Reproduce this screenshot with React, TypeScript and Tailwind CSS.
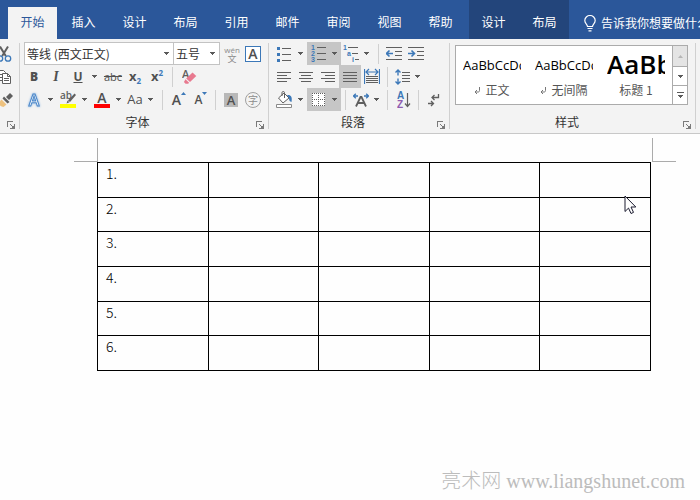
import { ReactNode } from "react";
import clsx from "clsx";

const INK = "#5f5f5f";
const BLUE = "#3c78b8";

const tabs = ["开始", "插入", "设计", "布局", "引用", "邮件", "审阅", "视图", "帮助"];
const toolTabs = ["设计", "布局"];

const styleCards = [
  { name: "正文", mark: true, big: false },
  { name: "无间隔", mark: true, big: false },
  { name: "标题 1", mark: false, big: true },
];

/* ---------- small building blocks ---------- */

const Tool = ({
  label,
  children,
  w = "w-[22px]",
  styleClass,
}: {
  label: string;
  children: ReactNode;
  w?: string;
  styleClass?: string;
}) => (
  <button
    type="button"
    aria-label={label}
    className={clsx(
      "h-full shrink-0 flex items-center justify-center leading-none text-[#505050]",
      w,
      styleClass
    )}
  >
    {children}
  </button>
);

const CaretIcon = () => (
  <svg width="5" height="3" viewBox="0 0 5 3" shapeRendering="crispEdges">
    <path d="M0 0h5v1h-1v1h-1v1h-1v-1h-1v-1h-1z" fill="#5a5a5a" />
  </svg>
);

const Caret = ({ label }: { label: string }) => (
  <button
    type="button"
    aria-label={label}
    className="h-full w-3 shrink-0 flex items-center pl-[3px]"
  >
    <CaretIcon />
  </button>
);

const Sep = ({ styleClass }: { styleClass: string }) => (
  <div className={clsx("w-px h-5 shrink-0 bg-[#d0d0d0]", styleClass)} />
);

const Row = ({ children }: { children: ReactNode }) => (
  <div className="h-[23px] flex items-center">{children}</div>
);

const Group = ({
  title,
  w,
  children,
}: {
  title: string;
  w: string;
  children: ReactNode;
}) => (
  <>
    <section className={clsx("shrink-0 flex flex-col pt-[3px]", w)}>
      <div className="h-[69px]">{children}</div>
      <footer className="h-[22px] flex items-center">
        <h2 className="flex-1 text-center text-xs text-[#333]">{title}</h2>
        <button
          type="button"
          aria-label={`${title} 更多`}
          className="w-4 flex justify-center pt-[6px]"
        >
          <svg width="8" height="8" viewBox="0 0 8 8" shapeRendering="crispEdges">
            <path d="M0.5 6V0.5H6M3 3l3 3" fill="none" stroke="#7a7a7a" />
            <path d="M3 7h4v-4h1v5h-5zM5 5h2v2h-2z" fill="#7a7a7a" />
          </svg>
        </button>
      </footer>
    </section>
    <div className="w-px my-1 shrink-0 bg-[#d0d0d0]" />
  </>
);

/* ---------- icons ---------- */

const CutIcon = () => (
  <svg width="16" height="18" viewBox="0 0 16 18" fill="none">
    <path d="M4 1.5L9.8 11M12 1.5L6.2 11" stroke={INK} strokeWidth="2" />
    <circle cx="4" cy="13.5" r="2.7" stroke={BLUE} strokeWidth="1.3" />
    <circle cx="12" cy="13.5" r="2.7" stroke={BLUE} strokeWidth="1.3" />
  </svg>
);

const CopyIcon = () => (
  <svg width="16" height="16" viewBox="0 0 16 16" fill="#fff" stroke={INK}>
    <path d="M1.5 1.5h6l2 2v8h-8z" />
    <path d="M3 5.5h4M3 8.5h3" />
    <path d="M6.5 4.5h5l3 3v7h-8z" />
    <path d="M11.5 4.5v3h3M8 9.5h5M8 11.5h5" fill="none" />
  </svg>
);

const BrushIcon = () => (
  <svg width="17" height="16" viewBox="0 0 17 16">
    <path d="M14 1l3 3-4 4-3-3z" fill={INK} />
    <path d="M8 4.5l5.5 5.5-2 1.5-5-5z" fill={INK} />
    <path d="M5.5 7.5l5 5-3 2.5c-2-.5-4-1.5-5.5-3.5z" fill="#eec27f" />
  </svg>
);

const HighlightIcon = () => (
  <svg width="17" height="17" viewBox="0 0 17 17">
    <text x="0" y="8" fontSize="10" fontWeight="600" fontFamily="Open Sans" fill={INK}>
      ab
    </text>
    <path d="M14.5 2.5l1.5 1.5-6 7-2-1.5z" fill={INK} />
    <path d="M7.5 9.5l2 1.8-3 1.2z" fill={INK} />
    <path d="M0 13h16v4H0z" fill="#ffff00" />
  </svg>
);

const EraserIcon = () => (
  <svg width="15" height="16" viewBox="0 0 15 16">
    <text x="0" y="9" fontSize="11" fontWeight="600" fontFamily="Open Sans" fill={INK}>
      A
    </text>
    <path d="M10.5 3.5l3.8 3.5-6.3 6-3.8-3.5z" fill="#e8798f" />
    <path d="M3.5 10.2l3.6 3.5-1 1h-2.500l-1.700-1.800z" fill="#e8798f" />
  </svg>
);

const BulletsIcon = () => (
  <svg width="14" height="16" viewBox="0 0 14 16" shapeRendering="crispEdges">
    <path d="M0 1h3v3H0zM0 7h3v3H0zM0 13h3v3H0z" fill={BLUE} />
    <path d="M5 2h9v1H5zM5 8h9v1H5zM5 14h9v1H5z" fill={INK} />
  </svg>
);

const NumbersIcon = () => (
  <svg width="15" height="18" viewBox="0 0 15 18">
    <g fontSize="7" fontWeight="700" fontFamily="Liberation Sans" fill={BLUE}>
      <text x="0" y="5">1</text>
      <text x="0" y="11">2</text>
      <text x="0" y="17">3</text>
    </g>
    <path d="M6 2h9v1H6zM6 8h9v1H6zM6 14h9v1H6z" fill={INK} />
  </svg>
);

const MultiLevelIcon = () => (
  <svg width="16" height="18" viewBox="0 0 16 18">
    <g fontSize="7" fontWeight="700" fontFamily="Liberation Sans" fill={BLUE}>
      <text x="0" y="5">1</text>
      <text x="4" y="11">a</text>
      <text x="9" y="17">i</text>
    </g>
    <path d="M5 2h10v1H5zM9 8h6v1H9zM12 14h4v1h-4z" fill={INK} />
  </svg>
);

const AlignIcon = ({ d }: { d: string }) => (
  <svg width="14" height="10" viewBox="0 0 14 10" shapeRendering="crispEdges">
    <path d={d} stroke={INK} fill="none" />
  </svg>
);

const DistributeIcon = () => (
  <svg width="16" height="17" viewBox="0 0 16 17" fill="none">
    <path d="M0.5 1v15M15.5 1v15M2 4h12M5 1L2 4l3 3M11 1l3 3-3 3" stroke={BLUE} strokeWidth="1.2" />
    <path d="M2 8.5h12M2 10.5h12M2 12.5h12M2 14.5h12" stroke={INK} />
  </svg>
);

const IndentIcon = ({ out }: { out?: boolean }) => (
  <svg width="16" height="14" viewBox="0 0 16 14" fill="none">
    <path d="M0 0.5h16M9 4.5h7M9 8.5h7M0 12.5h16" stroke={INK} />
    <path
      d={out ? "M7 6.5H1M3.5 3.5l-3 3 3 3" : "M0 6.5H6M3.5 3.5l3 3-3 3"}
      stroke={BLUE}
      strokeWidth="1.6"
    />
  </svg>
);

const LineSpacingIcon = () => (
  <svg width="15" height="16" viewBox="0 0 15 16" fill="none">
    <path d="M3 1v5.5M0.5 3.5L3 1l2.5 2.5M3 9.5V15M0.5 12.5L3 15l2.5-2.5" stroke={BLUE} strokeWidth="1.4" />
    <path d="M7 3.5h8M7 6.5h8M7 9.5h8M7 12.5h8" stroke={INK} />
  </svg>
);

const BucketIcon = () => (
  <svg width="17" height="17" viewBox="0 0 17 17">
    <path d="M2.5 7L8 2l5 5-6 5z" fill="#fff" stroke={INK} />
    <path d="M6 5V1.5c0-1.300 2.500-1.300 2.500 0V7" fill="none" stroke={INK} />
    <path d="M11 4c4-.5 5.500 2 4.500 7-1.500-.5-2.500-1-2.500-4z" fill={BLUE} />
    <path d="M0.5 13.5h15v3h-15z" fill="#fff" stroke="#8a8a8a" />
  </svg>
);

const BordersIcon = () => (
  <svg width="13" height="13" viewBox="0 0 13 13" shapeRendering="crispEdges">
    <path d="M0 0h13v13H0z" fill="#fff" />
    <path
      d="M0 .5h13M0 6.5h13M.5 0v13M6.5 0v13M12.5 0v13M0 12.5h13"
      stroke={INK}
      strokeDasharray="1 1"
    />
  </svg>
);

const AsianLayoutIcon = () => (
  <svg width="16" height="14" viewBox="0 0 16 14" fill="none">
    <path d="M3 13.5L7.5 4h1L13 13.5M5 10h6" stroke={INK} strokeWidth="1.8" />
    <path d="M0.5 3h4.5M2.8 .7L.5 3l2.300 2.300M15.500 3H11M13.200 .7L15.500 3l-2.300 2.300" stroke={BLUE} strokeWidth="1.3" />
  </svg>
);

const SortIcon = () => (
  <svg width="14" height="18" viewBox="0 0 14 18">
    <g fontSize="10" fontWeight="600" fontFamily="Liberation Sans">
      <text x="0" y="8" fill={BLUE}>A</text>
      <text x="0" y="17" fill="#8f5bb0">Z</text>
    </g>
    <path d="M10.5 2v13M8 12.5l2.5 3 2.500-3" stroke={INK} fill="none" strokeWidth="1.2" />
  </svg>
);

const MarksIcon = () => (
  <svg width="12" height="14" viewBox="0 0 12 14" fill="none" stroke={INK} strokeWidth="1.3">
    <path d="M10.5 1v3.500H4M6.500 2L4 4.500 6.500 7M0 10.500h5.500M3 8l2.500 2.500L3 13" />
  </svg>
);

const ReturnMark = () => (
  <svg width="6" height="7" viewBox="0 0 6 7" fill="none" stroke="#777">
    <path d="M5.5 0v3.500c0 1-.5 1.500-1.500 1.500H1M3 3L1 5l2 2" />
  </svg>
);

const BulbIcon = () => (
  <svg width="12" height="17" viewBox="0 0 12 17" fill="none" stroke="#fff" strokeWidth="1.2">
    <path d="M3.5 11.500c0-2-2.700-3-2.700-6a5.200 5 0 0 1 10.400 0c0 3-2.700 4-2.700 6zM3.500 13.500h5M4.500 15.800h3" />
  </svg>
);

/* ---------- ribbon ---------- */

const TabBar = () => (
  <nav className="h-[39px] pt-[7px] pl-2 flex bg-[#2b579a] text-xs text-white overflow-hidden">
    <div className="flex gap-[2px] shrink-0">
      {tabs.map((tab, i) => (
        <button
          key={tab}
          type="button"
          className={clsx(
            "w-[49px] h-8 pb-[2px]",
            i === 0 && "bg-[#f3f3f3] text-[#2b579a]"
          )}
        >
          {tab}
        </button>
      ))}
    </div>
    <div className="-mt-[7px] pt-[7px] ml-1 flex gap-[2px] shrink-0 bg-[#23457b]">
      {toolTabs.map((tab) => (
        <button key={tab} type="button" className="w-[49px] h-8 pb-[2px]">
          {tab}
        </button>
      ))}
    </div>
    <button
      type="button"
      className="h-8 ml-[15px] flex items-center gap-[5px] shrink-0 whitespace-nowrap"
    >
      <BulbIcon />
      告诉我你想要做什么
    </button>
  </nav>
);

const Combo = ({
  label,
  value,
  w,
}: {
  label: string;
  value: string;
  w: string;
}) => (
  <label className={clsx("relative shrink-0 flex h-[23px]", w)}>
    <select
      aria-label={label}
      className="appearance-none w-full h-full border border-[#c3c3c3] bg-white pl-[2px] text-xs text-[#333]"
    >
      <option>{value}</option>
    </select>
    <span className="absolute right-[5px] inset-y-0 flex items-center pointer-events-none">
      <CaretIcon />
    </span>
  </label>
);

const FontGroup = () => (
  <Group title="字体" w="w-[248px] pl-[3px]">
    <Row>
      <div className="flex ml-px">
        <Combo label="字体" value="等线 (西文正文)" w="w-[150px]" />
        <Combo label="字号" value="五号" w="w-[47px] -ml-px" />
      </div>
      <Tool label="拼音指南" w="w-6" styleClass="flex-col">
        <span className="font-['Open_Sans'] text-[8px] leading-[9px] text-[#8c8c8c]">
          wén
        </span>
        <span className="text-[9px] leading-[9px] text-[#8c8c8c]">文</span>
      </Tool>
      <Tool label="字符边框" w="w-[18px]">
        <span className="size-4 border border-[#3c78b8] bg-white text-center font-['Open_Sans'] text-sm leading-[14px] font-semibold">
          A
        </span>
      </Tool>
    </Row>
    <Row>
      <Tool label="加粗" styleClass="font-['Open_Sans'] text-xs font-extrabold">
        B
      </Tool>
      <Tool label="倾斜" styleClass="font-['Liberation_Serif'] text-sm font-bold italic">
        I
      </Tool>
      <Tool label="下划线" styleClass="font-['Open_Sans'] text-xs font-bold underline">
        U
      </Tool>
      <Caret label="下划线样式" />
      <Tool label="删除线" w="w-6" styleClass="font-['Open_Sans'] text-[11px] line-through">
        abc
      </Tool>
      <Tool label="下标" w="w-5" styleClass="font-['Open_Sans'] text-[13px] font-bold">
        x<span className="mt-2 text-[8px] text-[#3c78b8]">2</span>
      </Tool>
      <Tool label="上标" w="w-6" styleClass="font-['Open_Sans'] text-[13px] font-bold">
        x<span className="mb-2 text-[8px] text-[#3c78b8]">2</span>
      </Tool>
      <Sep styleClass="ml-[3px]" />
      <Tool label="清除格式" w="w-8">
        <EraserIcon />
      </Tool>
    </Row>
    <Row>
      <Tool label="文本效果">
        <span className="font-['Open_Sans'] text-base leading-4 font-semibold text-white [-webkit-text-stroke:1px_#4a86c8] drop-shadow-[0_0_1px_#7fb0e4]">
          A
        </span>
      </Tool>
      <Caret label="更多文本效果" />
      <Tool label="突出显示">
        <HighlightIcon />
      </Tool>
      <Caret label="突出显示颜色" />
      <Tool label="字体颜色" styleClass="flex-col">
        <span className="font-['Open_Sans'] text-sm leading-[13px] font-semibold">
          A
        </span>
        <span className="w-4 h-1 bg-[#ff0000]" />
      </Tool>
      <Caret label="更多字体颜色" />
      <Tool label="更改大小写" w="w-5" styleClass="font-['Open_Sans'] text-[13px]">
        Aa
      </Tool>
      <Caret label="大小写选项" />
      <Sep styleClass="ml-[5px] mr-[5px]" />
      <Tool label="增大字号" styleClass="font-['Open_Sans'] text-sm font-semibold">
        A
        <svg width="5" height="3" viewBox="0 0 5 3" className="mb-3">
          <path d="M0 3L2.500 0 5 3z" fill={BLUE} />
        </svg>
      </Tool>
      <Tool label="减小字号" styleClass="font-['Open_Sans'] text-xs font-semibold">
        A
        <svg width="5" height="3" viewBox="0 0 5 3" className="mb-3">
          <path d="M0 0h5L2.500 3z" fill={BLUE} />
        </svg>
      </Tool>
      <Sep styleClass="ml-[3px] mr-1" />
      <Tool label="字符底纹">
        <span className="size-[14px] bg-[#b8b8b8] text-center font-['Open_Sans'] text-[13px] leading-[14px] font-semibold">
          A
        </span>
      </Tool>
      <Tool label="带圈字符">
        <span className="size-4 rounded-full border border-[#a0a0a0] text-[10px] leading-[13px] text-[#8c8c8c]">
          字
        </span>
      </Tool>
    </Row>
  </Group>
);

const ParagraphGroup = () => (
  <Group title="段落" w="w-[180px] pl-1">
    <Row>
      <Tool label="项目符号">
        <BulletsIcon />
      </Tool>
      <Caret label="项目符号库" />
      <div className="flex h-full bg-[#c6c6c6]">
        <Tool label="编号">
          <NumbersIcon />
        </Tool>
        <Caret label="编号库" />
      </div>
      <Tool label="多级列表" w="w-5">
        <MultiLevelIcon />
      </Tool>
      <Caret label="列表库" />
      <Sep styleClass="ml-[5px] mr-1" />
      <Tool label="减少缩进量">
        <IndentIcon out />
      </Tool>
      <Tool label="增加缩进量">
        <IndentIcon />
      </Tool>
    </Row>
    <Row>
      <Tool label="左对齐">
        <AlignIcon d="M0 .5h14M0 3.500h10M0 6.500h14M0 9.500h10" />
      </Tool>
      <Tool label="居中">
        <AlignIcon d="M0 .5h14M2 3.500h10M0 6.500h14M2 9.500h10" />
      </Tool>
      <Tool label="右对齐">
        <AlignIcon d="M0 .5h14M4 3.500h10M0 6.500h14M4 9.500h10" />
      </Tool>
      <Tool label="两端对齐" styleClass="bg-[#c6c6c6]">
        <AlignIcon d="M0 .5h14M0 3.500h14M0 6.500h14M0 9.500h14" />
      </Tool>
      <Tool label="分散对齐">
        <DistributeIcon />
      </Tool>
      <Sep styleClass="ml-1 mr-1" />
      <Tool label="行和段落间距" w="w-5">
        <LineSpacingIcon />
      </Tool>
      <Caret label="间距选项" />
    </Row>
    <Row>
      <Tool label="底纹">
        <BucketIcon />
      </Tool>
      <Caret label="底纹颜色" />
      <div className="flex h-full bg-[#c6c6c6]">
        <Tool label="边框">
          <BordersIcon />
        </Tool>
        <Caret label="边框选项" />
      </div>
      <Sep styleClass="ml-1 mr-[5px]" />
      <Tool label="中文版式" w="w-5">
        <AsianLayoutIcon />
      </Tool>
      <Caret label="版式选项" />
      <Sep styleClass="ml-1 mr-1" />
      <Tool label="排序" w="w-6">
        <SortIcon />
      </Tool>
      <Sep styleClass="ml-[2px] mr-1" />
      <Tool label="显示编辑标记">
        <MarksIcon />
      </Tool>
    </Row>
  </Group>
);

const StylesGroup = () => (
  <Group title="样式" w="w-[245px] pl-[5px]">
    <div className="mt-[3px] mr-[7px] h-[60px] flex border border-[#ababab] bg-white">
      {styleCards.map((card) => (
        <button
          key={card.name}
          type="button"
          className="w-[72px] px-[7px] flex flex-col"
        >
          <span
            className={clsx(
              "h-9 w-full overflow-hidden whitespace-nowrap text-left font-['Open_Sans'] text-black",
              card.big
                ? "text-[26px] leading-9 font-semibold"
                : "text-[13px] leading-[38px]"
            )}
          >
            {card.big ? "AaBbC" : "AaBbCcDd"}
          </span>
          <span className="w-full h-4 flex items-center justify-center gap-[5px] text-xs leading-4 text-[#555]">
            {card.mark && <ReturnMark />}
            {card.name}
          </span>
        </button>
      ))}
      <div className="flex-1 flex flex-col border-l border-[#ababab]">
        <button
          type="button"
          aria-label="上一行"
          className="h-5 flex items-center justify-center bg-[#e4e4e4]"
        >
          <svg width="5" height="3" viewBox="0 0 5 3">
            <path d="M0 3L2.500 0 5 3z" fill="#b5b5b5" />
          </svg>
        </button>
        <button
          type="button"
          aria-label="下一行"
          className="h-5 flex items-center justify-center border-y border-[#ababab]"
        >
          <CaretIcon />
        </button>
        <button
          type="button"
          aria-label="其他样式"
          className="flex-1 flex flex-col gap-[2px] items-center justify-center"
        >
          <span className="w-[7px] h-px bg-[#5a5a5a]" />
          <CaretIcon />
        </button>
      </div>
    </div>
  </Group>
);

const Ribbon = () => (
  <div className="flex bg-[#f3f3f3] border-b border-[#c8c8c8] overflow-hidden">
    <Group title="" w="w-[19px]">
      <Row>
        <Tool label="剪切" styleClass="-ml-[7px]">
          <CutIcon />
        </Tool>
      </Row>
      <Row>
        <Tool label="复制" styleClass="-ml-[7px]">
          <CopyIcon />
        </Tool>
      </Row>
      <Row>
        <Tool label="格式刷" styleClass="-ml-[7px]">
          <BrushIcon />
        </Tool>
      </Row>
    </Group>
    <FontGroup />
    <ParagraphGroup />
    <StylesGroup />
  </div>
);

/* ---------- document ---------- */

const Page = () => (
  <main className="relative flex-1 flex flex-col pt-1">
    {/* margin corners */}
    <div className="flex justify-between pl-[74px] pr-6">
      <div className="w-6 h-6 border-r border-b border-[#ababab]" />
      <div className="w-6 h-6 border-l border-b border-[#ababab]" />
    </div>

    <div className="pl-[97px] pr-[49px]">
      <table className="w-full h-[209px] table-fixed border-collapse text-sm leading-5 font-light text-black">
        <tbody>
          {[1, 2, 3, 4, 5, 6].map((n) => (
            <tr key={n}>
              <td className="border border-black pl-2 align-top">{n}.</td>
              {[1, 2, 3, 4].map((c) => (
                <td key={c} className="border border-black" />
              ))}
            </tr>
          ))}
        </tbody>
      </table>
    </div>

    <p className="mt-auto self-end pr-[15px] pb-[5px] text-xl leading-7 text-[#bcbcbc] whitespace-nowrap">
      <span className="font-light">亮术网</span>
      <span className="font-['Liberation_Serif']"> www.liangshunet.com</span>
    </p>

    {/* mouse pointer */}
    <svg
      className="absolute right-[63px] top-[61px]"
      width="13"
      height="20"
      viewBox="0 0 13 20"
    >
      <path
        d="M1 1v15.5l3.500-3.400 2.500 5.400 2.500-1.100-2.500-5.400h4.800z"
        fill="#fff"
        stroke="#1c1c30"
      />
    </svg>
  </main>
);

const App = () => (
  <div className="min-h-screen flex flex-col overflow-x-hidden bg-[#fefefe] font-['Noto_Sans_CJK_SC',sans-serif]">
    <TabBar />
    <Ribbon />
    <Page />
  </div>
);

export default App;
